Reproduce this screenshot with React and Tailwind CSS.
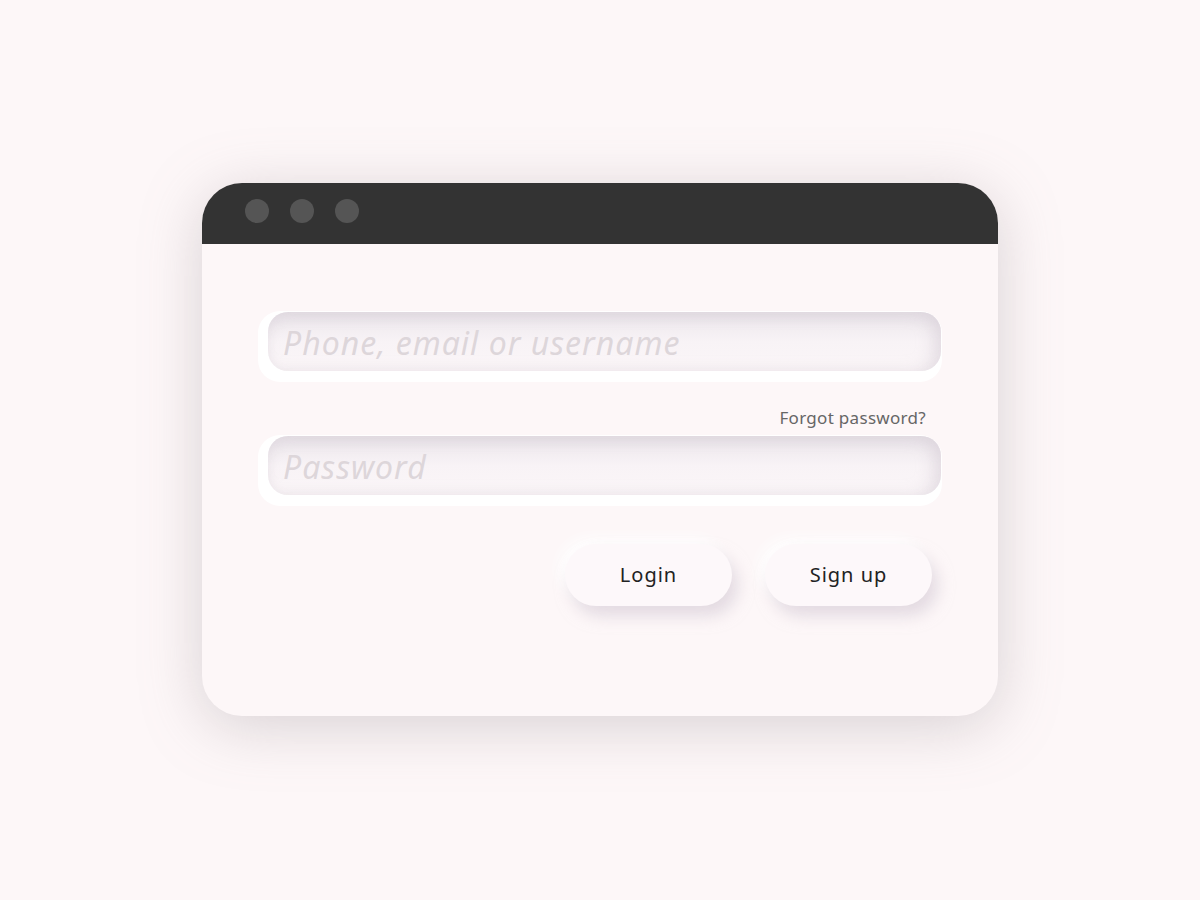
import React from 'react'

// Neumorphic inset input
function SoftInput({ placeholder, type = 'text' }) {
  return (
    <div className="w-full h-[71px] bg-white rounded-[22px] pl-[10px] pr-[1px] pt-[1px] pb-[11px]">
      <div className="h-full rounded-[20px] bg-gradient-to-b from-[#ebe6eb] via-[#f8f3f6] to-[#fbf6f8] shadow-[inset_0_6px_12px_rgba(215,207,215,0.45),inset_-10px_0_14px_rgba(222,214,222,0.5)] flex items-center px-[15px] pt-[3px]">
        <input
          type={type}
          placeholder={placeholder}
          className="w-full bg-transparent outline-none italic text-[32px] tracking-[1px] text-[#555] placeholder:text-[#ddd6da] font-['Noto_Sans',sans-serif]"
        />
      </div>
    </div>
  )
}

// Raised pill button
function SoftButton({ label }) {
  return (
    <button className="w-[167px] h-[62px] rounded-full bg-[#fdf8fa] text-[20px] tracking-[1px] text-[#222] font-['Noto_Sans',sans-serif] shadow-[6px_10px_16px_rgba(205,195,208,0.55),-6px_-6px_14px_rgba(255,255,255,0.9)]">
      {label}
    </button>
  )
}

export default function App() {
  return (
    <div className="min-h-screen w-full bg-[#fdf7f8] flex items-center justify-center font-['Noto_Sans',sans-serif]">
      <div className="w-[796px] h-[533px] -mt-[2px] rounded-[40px] bg-[#fdf7f8] overflow-hidden shadow-[0_10px_60px_rgba(150,140,145,0.35)] flex flex-col">
        {/* Title bar */}
        <div className="h-[61px] bg-[#333333] flex items-start gap-[21px] pl-[43px] pt-[16px] shrink-0">
          <span className="w-[24px] h-[24px] rounded-full bg-[#555555]" />
          <span className="w-[24px] h-[24px] rounded-full bg-[#555555]" />
          <span className="w-[24px] h-[24px] rounded-full bg-[#555555]" />
        </div>

        {/* Form */}
        <div className="flex flex-col px-[56px] pt-[67px]">
          <SoftInput placeholder="Phone, email or username" />
          <div className="flex justify-end pr-[16px] mt-[24px] mb-[5px]">
            <a className="text-[17px] leading-[24px] tracking-[0.3px] text-[#666] cursor-pointer">
              Forgot password?
            </a>
          </div>
          <SoftInput placeholder="Password" type="password" />
          <div className="flex justify-end gap-[33px] pr-[10px] mt-[38px]">
            <SoftButton label="Login" />
            <SoftButton label="Sign up" />
          </div>
        </div>
      </div>
    </div>
  )
}
